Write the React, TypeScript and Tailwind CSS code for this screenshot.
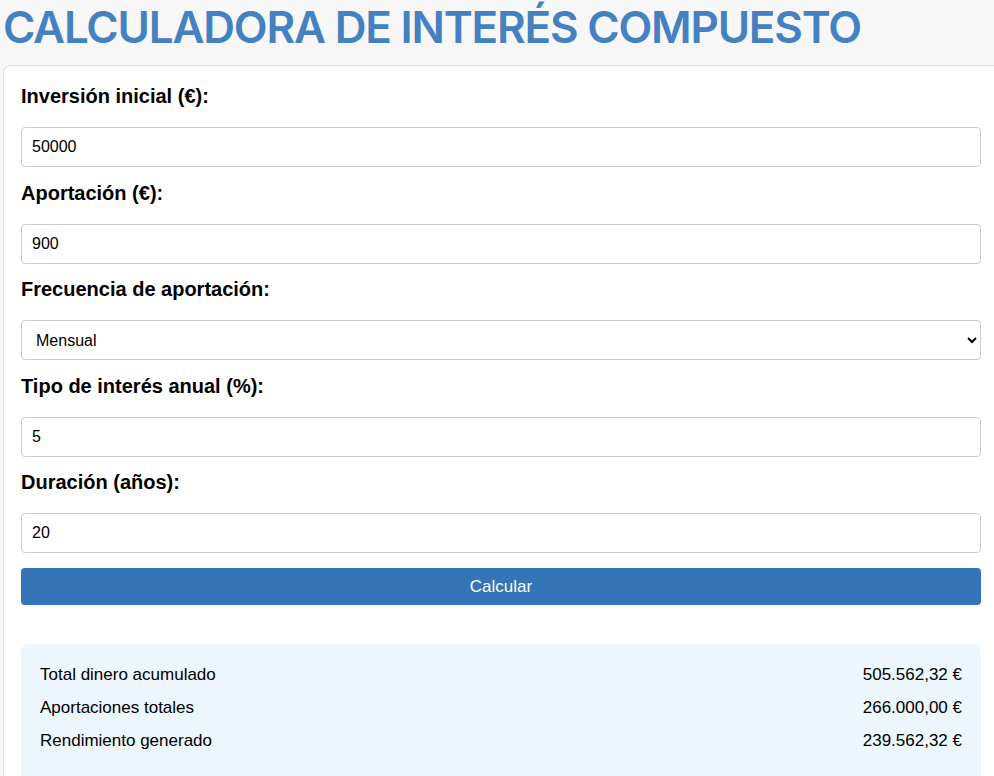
import React, { useState } from 'react';

const labelCls = 'block text-[20px] font-bold leading-[23px] text-black';
const inputCls =
  'block w-full h-[40px] rounded-[4px] border border-[#cccccc] bg-white px-[10px] text-[16px] text-black outline-none';

function Field({ label, children }: { label: string; children: React.ReactNode }) {
  return (
    <div className="flex flex-col gap-[19px]">
      <label className={labelCls}>{label}</label>
      {children}
    </div>
  );
}

export default function App() {
  const [inicial, setInicial] = useState('50000');
  const [aporte, setAporte] = useState('900');
  const [frecuencia, setFrecuencia] = useState('mensual');
  const [interes, setInteres] = useState('5');
  const [anos, setAnos] = useState('20');

  const resultados = [
    { label: 'Total dinero acumulado', value: '505.562,32 €' },
    { label: 'Aportaciones totales', value: '266.000,00 €' },
    { label: 'Rendimiento generado', value: '239.562,32 €' },
  ];

  return (
    <div
      className="w-[994px] h-[776px] overflow-hidden bg-[#f7f7f7]"
      style={{ fontFamily: '"Liberation Sans", Arial, sans-serif' }}
    >
      <h1
        className="pl-[3px] text-[44px] font-semibold leading-[54px] tracking-[-1.2px] text-[#4481c1]"
        style={{ fontFamily: 'Inter, sans-serif' }}
      >
        CALCULADORA DE INTERÉS COMPUESTO
      </h1>

      {/* Form card */}
      <div className="ml-[3px] mt-[11px] w-[1000px] rounded-[8px] border border-[#dddddd] bg-white pl-[17px] pr-[17px] pt-[19px]">
        <div className="w-[960px] flex flex-col gap-[14.5px]">
          <Field label="Inversión inicial (€):">
            <input className={inputCls} value={inicial} onChange={(e) => setInicial(e.target.value)} />
          </Field>
          <Field label="Aportación (€):">
            <input className={inputCls} value={aporte} onChange={(e) => setAporte(e.target.value)} />
          </Field>
          <Field label="Frecuencia de aportación:">
            <select className={inputCls} value={frecuencia} onChange={(e) => setFrecuencia(e.target.value)}>
              <option value="mensual">Mensual</option>
              <option value="trimestral">Trimestral</option>
              <option value="anual">Anual</option>
            </select>
          </Field>
          <Field label="Tipo de interés anual (%):">
            <input className={inputCls} value={interes} onChange={(e) => setInteres(e.target.value)} />
          </Field>
          <Field label="Duración (años):">
            <input className={inputCls} value={anos} onChange={(e) => setAnos(e.target.value)} />
          </Field>
        </div>

        <button className="mt-[15px] block w-[960px] h-[37px] rounded-[4px] bg-[#3375b6] text-[17px] text-white">
          Calcular
        </button>

        {/* Results */}
        <div className="mt-[39px] w-[960px] rounded-[8px] bg-[#eef6fd] px-[19px] pt-[14px] pb-[30px]">
          {resultados.map((r) => (
            <div key={r.label} className="flex h-[33px] items-center justify-between text-[17px] text-black">
              <span>{r.label}</span>
              <span>{r.value}</span>
            </div>
          ))}
        </div>
      </div>
    </div>
  );
}
